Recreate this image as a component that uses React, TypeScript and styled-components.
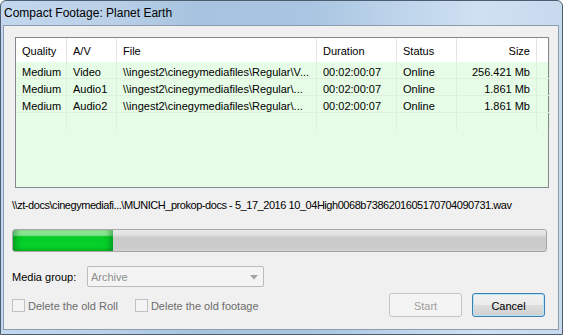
import * as React from "react";
import styled, { createGlobalStyle, css } from "styled-components";

const GlobalStyle = createGlobalStyle`
  html, body {
    margin: 0;
    padding: 0;
    background: #ffffff;
  }
  * {
    box-sizing: border-box;
  }
`;

const UI_FONT = `"Liberation Sans", Arial, sans-serif`;

const Window = styled.div`
  width: 563px;
  height: 335px;
  display: flex;
  flex-direction: column;
  border: 1px solid #4d5e70;
  border-radius: 6px 6px 0 0;
  background: linear-gradient(
    to right,
    #c3d8ee 0%,
    #b9d0e8 20%,
    #a7c3df 35%,
    #a9c5e1 55%,
    #bcd3ea 70%,
    #cfe0f1 85%,
    #c7daee 100%
  );
  font-family: ${UI_FONT};
  font-size: 11px;
  color: #000;
  overflow: hidden;
`;

const TitleBar = styled.div`
  height: 24px;
  display: flex;
  align-items: center;
  padding-left: 3px;
  font-size: 12px;
  color: #000;
`;

const Client = styled.div`
  flex: 1;
  display: flex;
  flex-direction: column;
  margin: 0 3px 4px 2px;
  padding: 11px 11px 0 8px;
  border: 1px solid #8c9cae;
  background: #f0f0f0;
`;

const COLUMNS = "51px 50px 200px 80px 60px 80px 1fr";

const ListView = styled.div`
  height: 151px;
  margin: 0 -2px 0 3px;
  border: 1px solid #828790;
  background: #e6fce6;
  display: flex;
  flex-direction: column;
`;

const HeaderRow = styled.div`
  display: grid;
  grid-template-columns: ${COLUMNS};
  height: 24px;
  background: #ffffff;
`;

const HeaderCell = styled.div<{ $right?: boolean }>`
  padding: 2px 6px 0 6px;
  display: flex;
  align-items: center;
  justify-content: ${({ $right }) => ($right ? "flex-end" : "flex-start")};
  border-right: 1px solid #e5e5e5;
  white-space: nowrap;
`;

const Body = styled.div`
  flex: 1;
  display: grid;
  grid-template-columns: ${COLUMNS};
  grid-auto-rows: 17px;
  align-content: start;
`;

const Cell = styled.div<{ $right?: boolean }>`
  padding: 3px 6px 0 6px;
  display: flex;
  align-items: center;
  justify-content: ${({ $right }) => ($right ? "flex-end" : "flex-start")};
  border-right: 1px solid #dcf0dc;
  border-bottom: 1px solid #dcf0dc;
  white-space: nowrap;
  overflow: hidden;
`;

const FillerColumns = styled.div`
  grid-column: 1 / -1;
  height: 100%;
  display: grid;
  grid-template-columns: ${COLUMNS};
`;

const FillerCell = styled.div`
  border-right: 1px solid #dcf0dc;
`;

const PathLine = styled.div`
  margin-top: 9px;
  height: 16px;
  display: flex;
  align-items: center;
  white-space: nowrap;
  letter-spacing: -0.45px;
`;

const Progress = styled.div`
  margin-top: 16px;
  height: 23px;
  border: 1px solid #a7a7a7;
  border-radius: 3px;
  background: linear-gradient(
    to bottom,
    #ebebeb 0%,
    #dddddd 25%,
    #cbcbcb 35%,
    #cbcbcb 85%,
    #d4d4d4 100%
  );
  overflow: hidden;
  display: flex;
`;

const ProgressFill = styled.div`
  height: 100%;
  background: linear-gradient(
    to bottom,
    #9eeea6 0%,
    #7fe58a 25%,
    #06cc26 32%,
    #05d12b 80%,
    #04bd22 100%
  );
  box-shadow: inset 6px 0 6px -3px rgba(0, 90, 20, 0.45),
    inset -6px 0 6px -3px rgba(0, 90, 20, 0.45);
`;

const FieldRow = styled.div`
  margin-top: 14px;
  height: 21px;
  display: flex;
  align-items: center;
`;

const FieldLabel = styled.span`
  width: 75px;
`;

const Combo = styled.div`
  width: 177px;
  height: 21px;
  border: 1px solid #b8bcc0;
  border-radius: 2px;
  background: #f4f4f4;
  color: #8d8d8d;
  display: flex;
  align-items: center;
  justify-content: space-between;
  padding: 1px 5px 0 3px;
`;

const ComboArrow = styled.svg`
  width: 8px;
  height: 5px;
  fill: #a3a3a3;
`;

const BottomRow = styled.div`
  margin-top: 6px;
  display: flex;
  align-items: center;
`;

const CheckGroup = styled.div`
  flex: 1;
  display: flex;
  align-items: center;
  gap: 17px;
  padding-top: 1px;
`;

const CheckItem = styled.label`
  display: flex;
  align-items: center;
  gap: 3px;
  color: #6d6d6d;
`;

const CheckBox = styled.span`
  width: 13px;
  height: 13px;
  border: 1px solid #c1c1c1;
  background: #f4f4f4;
`;

const Buttons = styled.div`
  display: flex;
  gap: 10px;
  margin-right: 2px;
`;

const Button = styled.button<{ $default?: boolean }>`
  width: 73px;
  height: 24px;
  font-family: ${UI_FONT};
  font-size: 11px;
  border-radius: 3px;
  padding: 1px 0 0 0;
  ${({ $default }) =>
    $default
      ? css`
          color: #000;
          border: 1px solid #3c7fb1;
          background: linear-gradient(
            to bottom,
            #f2f2f2 0%,
            #ebebeb 48%,
            #dddddd 52%,
            #cfcfcf 100%
          );
          box-shadow: inset 0 0 0 1px #b8e6f9;
        `
      : css`
          color: #a0a0a0;
          border: 1px solid #c2c5c8;
          background: #f4f4f4;
        `}
`;

interface ClipRow {
  quality: string;
  av: string;
  file: string;
  duration: string;
  status: string;
  size: string;
}

const ROWS: ClipRow[] = [
  {
    quality: "Medium",
    av: "Video",
    file: "\\\\ingest2\\cinegymediafiles\\Regular\\V...",
    duration: "00:02:00:07",
    status: "Online",
    size: "256.421 Mb",
  },
  {
    quality: "Medium",
    av: "Audio1",
    file: "\\\\ingest2\\cinegymediafiles\\Regular\\...",
    duration: "00:02:00:07",
    status: "Online",
    size: "1.861 Mb",
  },
  {
    quality: "Medium",
    av: "Audio2",
    file: "\\\\ingest2\\cinegymediafiles\\Regular\\...",
    duration: "00:02:00:07",
    status: "Online",
    size: "1.861 Mb",
  },
];

const CURRENT_FILE =
  "\\\\zt-docs\\cinegymediafi...\\MUNICH_prokop-docs - 5_17_2016 10_04High0068b7386201605170704090731.wav";

export default function App() {
  const progress = 100;

  return (
    <>
      <GlobalStyle />
      <Window>
        <TitleBar>Compact Footage: Planet Earth</TitleBar>
        <Client>
          <ListView>
            <HeaderRow>
              <HeaderCell>Quality</HeaderCell>
              <HeaderCell>A/V</HeaderCell>
              <HeaderCell>File</HeaderCell>
              <HeaderCell>Duration</HeaderCell>
              <HeaderCell>Status</HeaderCell>
              <HeaderCell $right>Size</HeaderCell>
              <HeaderCell />
            </HeaderRow>
            <Body>
              {ROWS.map((r, i) => (
                <React.Fragment key={i}>
                  <Cell>{r.quality}</Cell>
                  <Cell>{r.av}</Cell>
                  <Cell>{r.file}</Cell>
                  <Cell>{r.duration}</Cell>
                  <Cell>{r.status}</Cell>
                  <Cell $right>{r.size}</Cell>
                  <Cell />
                </React.Fragment>
              ))}
              <FillerColumns>
                {Array.from({ length: 7 }).map((_, i) => (
                  <FillerCell key={i} />
                ))}
              </FillerColumns>
            </Body>
          </ListView>

          <PathLine>{CURRENT_FILE}</PathLine>

          <Progress>
            <ProgressFill style={{ width: `${progress}px` }} />
          </Progress>

          <FieldRow>
            <FieldLabel>Media group:</FieldLabel>
            <Combo>
              <span>Archive</span>
              <ComboArrow viewBox="0 0 8 5">
                <polygon points="0,0 8,0 4,4.5" />
              </ComboArrow>
            </Combo>
          </FieldRow>

          <BottomRow>
            <CheckGroup>
              <CheckItem>
                <CheckBox />
                Delete the old Roll
              </CheckItem>
              <CheckItem>
                <CheckBox />
                Delete the old footage
              </CheckItem>
            </CheckGroup>
            <Buttons>
              <Button disabled>Start</Button>
              <Button $default>Cancel</Button>
            </Buttons>
          </BottomRow>
        </Client>
      </Window>
    </>
  );
}
